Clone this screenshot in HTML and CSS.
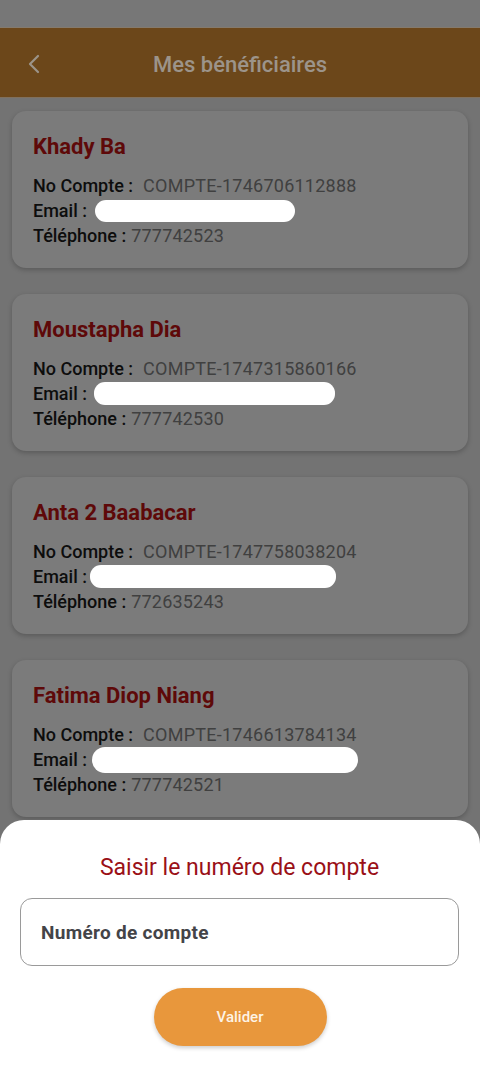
FILE: index.html
```html
<!DOCTYPE html>
<html lang="fr">
<head>
<meta charset="utf-8">
<meta name="viewport" content="width=480">
<title>Mes bénéficiaires</title>
<link rel="stylesheet" href="styles.css">
</head>
<body>
<div class="status"></div>
<header class="appbar">
  <svg class="back" width="24" height="24" viewBox="0 0 24 24"><path d="M15 4 L7 12 L15 20" fill="none" stroke="#9c948a" stroke-width="2.2" stroke-linecap="round" stroke-linejoin="round"/></svg>
  <h1 class="title">Mes bénéficiaires</h1>
</header>
<main class="list">
  <div class="card">
    <div class="name">Khady Ba</div>
    <div class="row"><span class="lbl">No Compte :</span><span class="val acct">COMPTE-1746706112888</span></div>
    <div class="row"><span class="lbl">Email :</span><span class="blob b1"></span></div>
    <div class="row"><span class="lbl">Téléphone :</span><span class="val">777742523</span></div>
  </div>
  <div class="card">
    <div class="name">Moustapha Dia</div>
    <div class="row"><span class="lbl">No Compte :</span><span class="val acct">COMPTE-1747315860166</span></div>
    <div class="row"><span class="lbl">Email :</span><span class="blob b2"></span></div>
    <div class="row"><span class="lbl">Téléphone :</span><span class="val">777742530</span></div>
  </div>
  <div class="card">
    <div class="name">Anta 2 Baabacar</div>
    <div class="row"><span class="lbl">No Compte :</span><span class="val acct">COMPTE-1747758038204</span></div>
    <div class="row"><span class="lbl">Email :</span><span class="blob b3"></span></div>
    <div class="row"><span class="lbl">Téléphone :</span><span class="val">772635243</span></div>
  </div>
  <div class="card">
    <div class="name">Fatima Diop Niang</div>
    <div class="row"><span class="lbl">No Compte :</span><span class="val acct">COMPTE-1746613784134</span></div>
    <div class="row"><span class="lbl">Email :</span><span class="blob b4"></span></div>
    <div class="row"><span class="lbl">Téléphone :</span><span class="val">777742521</span></div>
  </div>
</main>
<section class="sheet">
  <h2 class="sheet-title">Saisir le numéro de compte</h2>
  <div class="field">Numéro de compte</div>
  <div class="actions"><button class="btn">Valider</button></div>
</section>
</body>
</html>
```
FILE: styles.css
```css
* { box-sizing: border-box; }
html, body { margin: 0; padding: 0; }
body {
  width: 480px;
  height: 1067px;
  overflow: hidden;
  background: #737373;
  font-family: Roboto, "Noto Sans", sans-serif;
  position: relative;
}
.status {
  height: 28px;
  background: #777777;
  border-bottom: 1px solid #857a6c;
}
.appbar {
  height: 70px;
  background: #6c471a;
  border-bottom: 1px solid #80705d;
  display: flex;
  align-items: center;
  position: relative;
}
.back {
  position: absolute;
  left: 23px;
  top: 24px;
}
.title {
  margin: 0;
  padding-top: 4px;
  width: 100%;
  text-align: center;
  font-size: 22px;
  font-weight: 500;
  line-height: 26px;
  color: #9c948a;
}
.list {
  padding: 13px 12px 0 12px;
  display: flex;
  flex-direction: column;
  gap: 26px;
}
.card {
  background: #7b7b7b;
  border-radius: 14px;
  height: 157px;
  padding: 23px 21px 0 21px;
  box-shadow: 0 2px 5px rgba(0,0,0,0.22);
}
.name {
  font-size: 22px;
  font-weight: 700;
  line-height: 26px;
  color: #5e0909;
  margin-bottom: 13px;
}
.row {
  display: flex;
  align-items: center;
  height: 25px;
  font-size: 18px;
  line-height: 25px;
}
.lbl {
  font-weight: 500;
  color: #0d0d0d;
  margin-right: 5px;
}
.val {
  color: #404040;
  letter-spacing: 0.2px;
}
.acct { margin-left: 5px; letter-spacing: 0.25px; }
.blob {
  display: inline-block;
  background: #ffffff;
  height: 22px;
  border-radius: 11px;
}
.b1 { width: 200px; margin-left: 3px; }
.b2 { width: 241px; margin-left: 2px; height: 23px; }
.b3 { width: 246px; margin-left: -2px; height: 23px; }
.b4 { width: 266px; margin-left: 0px; height: 26px; border-radius: 13px; }
.sheet {
  position: absolute;
  left: 0;
  right: 0;
  top: 820px;
  bottom: 0;
  background: #ffffff;
  border-radius: 24px 24px 0 0;
  padding: 34px 21px 0 20px;
}
.sheet-title {
  margin: 0;
  text-align: center;
  font-size: 23px;
  font-weight: 400;
  line-height: 28px;
  color: #9a1017;
}
.field {
  margin-top: 16px;
  height: 68px;
  border: 1px solid #9a9a9a;
  border-radius: 12px;
  display: flex;
  align-items: center;
  padding-left: 20px;
  font-size: 19px;
  font-weight: 700;
  color: #444448;
  letter-spacing: 0.3px;
}
.actions {
  margin-top: 22px;
  display: flex;
  justify-content: center;
  padding-left: 1px;
}
.btn {
  width: 173px;
  height: 58px;
  border: none;
  border-radius: 29px;
  background: #e8973c;
  color: #fdf3e6;
  font-family: Roboto, "Noto Sans", sans-serif;
  font-size: 15px;
  font-weight: 500;
  box-shadow: 0 2px 4px rgba(0,0,0,0.2);
}
```
